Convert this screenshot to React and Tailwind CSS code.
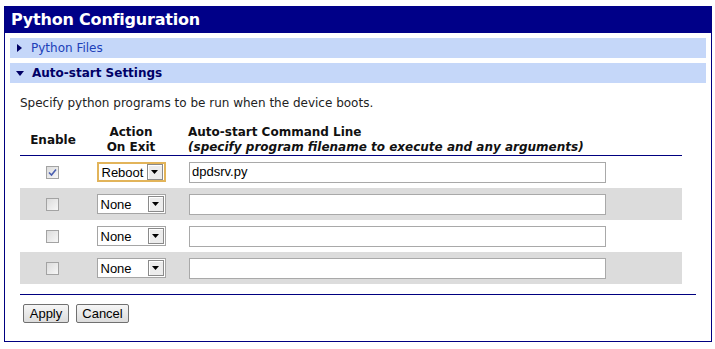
import React from 'react'

const rows = [
    { enabled: true, action: 'Reboot', command: 'dpdsrv.py', focused: true },
    { enabled: false, action: 'None', command: '' },
    { enabled: false, action: 'None', command: '' },
    { enabled: false, action: 'None', command: '' },
]

function Checkbox({ checked }) {
    return <span className="inline-flex w-[13px] h-[13px] border border-[#a3a3a3] bg-gradient-to-br from-[#dcdcdc] to-[#f7f7f7] items-center justify-center">
        {checked && <svg width="9" height="9" viewBox="0 0 9 9">
            <path d="M1 4.5 L3.5 7 L8 1.5" fill="none" stroke="#4a5fb0" strokeWidth="1.6" />
        </svg>}
    </span>
}

function Select({ value, focused }) {
    return <div className={`flex items-center w-[69px] h-[20px] bg-white ${focused ? 'border-2 border-[#e2b45a]' : 'border border-[#a5a5a5]'}`}>
        <span className="flex-1 pl-[3px] text-[13px] leading-none text-black font-['Liberation_Sans',Arial,sans-serif]">{value}</span>
        <span className="flex items-center justify-center w-[16px] h-[16px] mr-[1px] border border-[#8a8a8a] bg-[#ececec] shadow-[inset_1px_1px_0_#fff]">
            <svg width="7" height="4" viewBox="0 0 7 4"><path d="M0 0 H7 L3.5 4 Z" fill="#000" /></svg>
        </span>
    </div>
}

export default function App() {
    return <div className="w-[715px] h-[349px] bg-white pt-[6px] pl-[4px] font-['DejaVu_Sans',Verdana,sans-serif]">
        <div className="w-[708px] h-[336px] border border-[#000080] border-t-0 flex flex-col">
            <div className="h-[27px] bg-[#000088] text-white font-bold text-[16px] leading-none flex items-center pl-[6px] tracking-[-0.2px]">Python Configuration</div>

            <div className="px-[5px] pt-[5px] flex flex-col gap-[5px]">
                <div className="h-[20px] bg-[#c5d7f9] flex items-center pl-[7px] text-[12px] text-[#2040b8]">
                    <svg width="5" height="8" viewBox="0 0 5 8" className="mr-[9px]"><path d="M0 0 L5 4 L0 8 Z" fill="#000066" /></svg>
                    Python Files
                </div>
                <div className="h-[20px] bg-[#c5d7f9] flex items-center pl-[6px] text-[12px] font-bold text-[#000066]">
                    <svg width="8" height="5" viewBox="0 0 8 5" className="mr-[8px]"><path d="M0 0 H8 L4 5 Z" fill="#000066" /></svg>
                    Auto-start Settings
                </div>
            </div>

            <p className="ml-[15px] mt-[11px] text-[12px] text-[#222]">Specify python programs to be run when the device boots.</p>

            <div className="ml-[15px] mt-[12px] w-[662px]">
                <div className="flex items-center h-[32px] border-b border-[#000080] text-[12px] font-bold text-[#111] leading-[15px]">
                    <div className="w-[66px] text-center pt-[2px]">Enable</div>
                    <div className="w-[90px] text-center">Action<br />On Exit</div>
                    <div className="pl-[12px]">Auto-start Command Line<br /><i>(specify program filename to execute and any arguments)</i></div>
                </div>
                {rows.map((row, i) => <div key={i} className={`flex items-center h-[32px] ${i % 2 ? 'bg-[#dcdcdc]' : ''}`}>
                    <div className="w-[66px] flex justify-center pr-[1px]"><Checkbox checked={row.enabled} /></div>
                    <div className="w-[90px] flex justify-center"><Select value={row.action} focused={row.focused} /></div>
                    <div className="pl-[13px]">
                        <div className="w-[417px] h-[21px] bg-white border border-[#a9a9a9] flex items-center pl-[2px] text-[13px] text-black font-['Liberation_Sans',Arial,sans-serif]">{row.command}</div>
                    </div>
                </div>)}
            </div>

            <div className="ml-[15px] mt-[10px] w-[676px] border-t border-[#000080]"></div>

            <div className="ml-[18px] mt-[9px] flex gap-[7px] font-['Liberation_Sans',Arial,sans-serif] text-[13px] text-black">
                <button className="h-[19px] w-[46px] border border-[#707070] rounded-[2px] bg-gradient-to-b from-[#f6f6f6] to-[#dcdcdc] leading-none">Apply</button>
                <button className="h-[19px] w-[53px] border border-[#707070] rounded-[2px] bg-gradient-to-b from-[#f6f6f6] to-[#dcdcdc] leading-none">Cancel</button>
            </div>
        </div>
    </div>
}
